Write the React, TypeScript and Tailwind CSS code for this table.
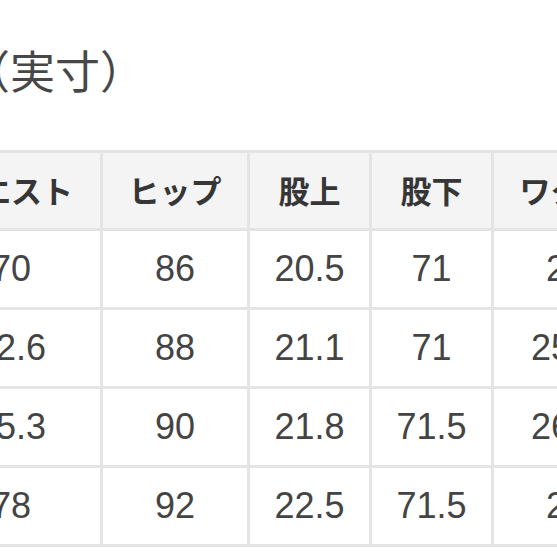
const headers = ["ウエスト", "ヒップ", "股上", "股下", "ワタリ"];

const rows = [
  ["70", "86", "20.5", "71", "27"],
  ["72.6", "88", "21.1", "71", "25.5"],
  ["75.3", "90", "21.8", "71.5", "26.5"],
  ["78", "92", "22.5", "71.5", "28"],
];

export default function App() {
  return (
    <div className="w-[557px] h-[557px] overflow-hidden bg-white">
      <h2 className="mt-[47px] ml-[-35px] text-[45px] leading-none font-normal text-[#474747] whitespace-nowrap font-['Noto_Sans_CJK_JP',sans-serif]">
        （実寸）
      </h2>

      <div className="mt-[58px] ml-[-81px] w-[744px] p-[3px] bg-[#e4e4e4] grid grid-cols-[178px_144px_119px_119px_144px] gap-[3px]">
        {headers.map((h) => (
          <div
            key={h}
            className="h-[75px] bg-[#f4f4f4] flex items-center justify-center text-[31px] font-bold text-[#363636] font-['Noto_Sans_CJK_JP',sans-serif]"
          >
            {h}
          </div>
        ))}
        {rows.map((row, i) =>
          row.map((v, j) => (
            <div
              key={`${i}-${j}`}
              className="h-[76px] bg-white flex items-center justify-center text-[36px] text-[#444] font-['Liberation_Sans',sans-serif]"
            >
              {v}
            </div>
          ))
        )}
      </div>
    </div>
  );
}
